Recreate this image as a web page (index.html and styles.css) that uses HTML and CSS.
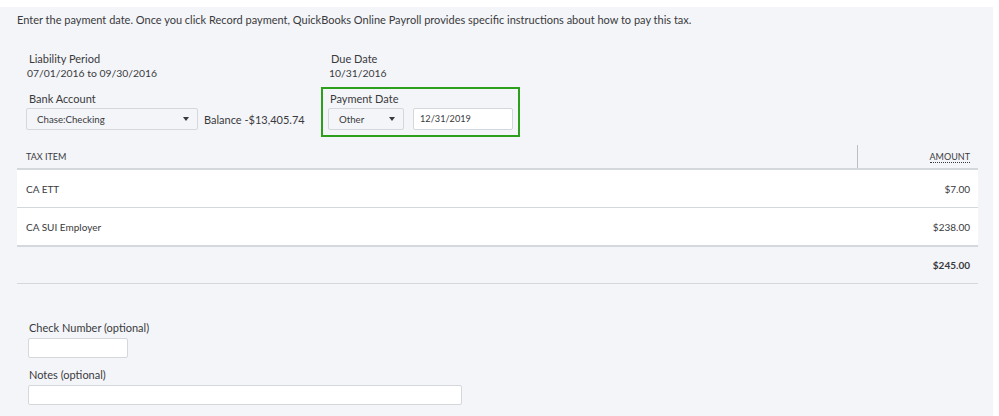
FILE: index.html
```html
<!DOCTYPE html>
<html>
<head>
<meta charset="utf-8">
<link rel="stylesheet" href="styles.css">
</head>
<body>
<div class="panel">
  <p class="intro">Enter the payment date. Once you click Record payment, QuickBooks Online Payroll provides specific instructions about how to pay this tax.</p>

  <div class="info">
    <div class="col col-left">
      <div class="field-static">
        <div class="label">Liability Period</div>
        <div class="value">07/01/2016 to 09/30/2016</div>
      </div>
      <div class="label bank-label">Bank Account</div>
      <div class="bank-row">
        <div class="select select-bank"><span>Chase:Checking</span><span class="caret"></span></div>
        <span class="balance">Balance -$13,405.74</span>
      </div>
    </div>
    <div class="col col-right">
      <div class="field-static due">
        <div class="label">Due Date</div>
        <div class="value">10/31/2016</div>
      </div>
      <div class="paybox">
        <div class="label">Payment Date</div>
        <div class="pay-row">
          <div class="select select-other"><span>Other</span><span class="caret"></span></div>
          <div class="input input-date">12/31/2019</div>
        </div>
      </div>
    </div>
  </div>

  <div class="table">
    <div class="thead">
      <div class="th th-item">TAX ITEM</div>
      <div class="th th-amount"><span class="dotted">AMOUNT</span></div>
    </div>
    <div class="tr">
      <div class="td">CA ETT</div>
      <div class="td amt">$7.00</div>
    </div>
    <div class="tr last">
      <div class="td">CA SUI Employer</div>
      <div class="td amt">$238.00</div>
    </div>
    <div class="tr total">
      <div class="td"></div>
      <div class="td amt">$245.00</div>
    </div>
  </div>

  <div class="extra">
    <div class="label">Check Number (optional)</div>
    <div class="input input-check"></div>
    <div class="label notes-label">Notes (optional)</div>
    <div class="input input-notes"></div>
  </div>
</div>
</body>
</html>
```
FILE: styles.css
```css
html, body {
  margin: 0;
  padding: 0;
  background: #ffffff;
}
body {
  font-family: "Lato", "Open Sans", "Liberation Sans", sans-serif;
  color: #393a3d;
  padding-top: 7px;
  padding-right: 6px;
}
.panel {
  background: #f4f5f8;
  height: 420px;
  padding: 5px 15px 0 17px;
}
.intro {
  margin: 0;
  font-size: 11px;
  line-height: 16px;
}
.info {
  display: flex;
  margin-top: 23px;
  padding-left: 9px;
}
.col-left {
  width: 295px;
}
.label {
  font-size: 11px;
  line-height: 15px;
  padding-left: 3px;
}
.value {
  font-size: 10.4px;
  line-height: 15px;
  padding-left: 1px;
}
.bank-label {
  margin-top: 10px;
}
.bank-row {
  display: flex;
  align-items: center;
  gap: 6px;
  margin-top: 2px;
}
.select {
  box-sizing: border-box;
  height: 22px;
  background: #f4f5f8;
  border: 1px solid #d4d7dc;
  border-radius: 2px;
  display: flex;
  align-items: center;
  justify-content: space-between;
  font-size: 9.7px;
  padding: 0 8px 0 10px;
}
.select-bank {
  width: 172px;
}
.select-other {
  width: 76px;
}
.caret {
  width: 0;
  height: 0;
  border-left: 3.5px solid transparent;
  border-right: 3.5px solid transparent;
  border-top: 4px solid #393a3d;
}
.balance {
  font-size: 11px;
}
.col-right {
  width: 199px;
}
.due {
  padding-left: 7px;
}
.paybox {
  margin-top: 6px;
  border: 2px solid #2ca01c;
  padding: 2px 5px 5px 5px;
}
.paybox .label {
  padding-left: 2px;
}
.pay-row {
  display: flex;
  gap: 9px;
  margin-top: 2px;
}
.input {
  box-sizing: border-box;
  background: #ffffff;
  border: 1px solid #d4d7dc;
  border-radius: 2px;
}
.input-date {
  width: 100px;
  height: 22px;
  font-size: 9.2px;
  line-height: 20px;
  padding-left: 6px;
}
.table {
  margin-top: 8px;
}
.thead {
  display: flex;
  height: 23px;
  border-bottom: 2px solid #d4d7dc;
}
.th {
  font-size: 9px;
  display: flex;
  align-items: center;
}
.th-item {
  flex: 1;
  padding-left: 9px;
  border-right: 1px solid #babec5;
}
.th-amount {
  width: 112px;
  justify-content: flex-end;
  padding-right: 8px;
}
.dotted {
  border-bottom: 1px dotted #393a3d;
  line-height: 11px;
}
.tr {
  display: flex;
  justify-content: space-between;
  align-items: center;
  height: 37px;
  background: #ffffff;
  border-bottom: 1px solid #d4d7dc;
}
.tr.last {
  border-bottom: 2px solid #d4d7dc;
}
.tr.total {
  background: #f4f5f8;
  height: 36px;
  border-bottom: 1px solid #d4d7dc;
  font-weight: 700;
}
.td {
  font-size: 10px;
  padding-left: 9px;
}
.td.amt {
  padding-left: 0;
  padding-right: 8px;
}
.extra {
  margin-top: 36px;
  padding-left: 11px;
}
.extra .label {
  padding-left: 1px;
}
.input-check {
  width: 100px;
  height: 20px;
  margin-top: 3px;
}
.notes-label {
  margin-top: 9px;
}
.input-notes {
  width: 434px;
  height: 20px;
  margin-top: 3px;
}
```
